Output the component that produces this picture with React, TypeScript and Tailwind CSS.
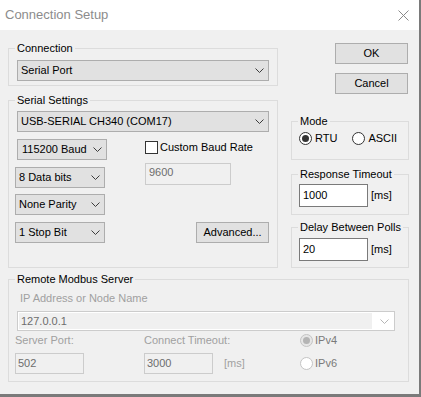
import React from "react";

const Chevron: React.FC<{ disabled?: boolean }> = ({ disabled }) => (
  <svg width="9" height="5" viewBox="0 0 9 5" className="shrink-0">
    <path
      d="M0.5 0.5 L4.5 4.5 L8.5 0.5"
      fill="none"
      stroke={disabled ? "#b5b5b5" : "#3c3c3c"}
      strokeWidth="1"
    />
  </svg>
);

const Combo: React.FC<{ label: string; className?: string }> = ({ label, className = "" }) => (
  <div
    className={`flex items-center justify-between h-[21px] border border-[#adadad] bg-[#e1e1e1] pl-[3px] pr-[4px] ${className}`}
  >
    <span className="leading-[13px]">{label}</span>
    <Chevron />
  </div>
);

const Button: React.FC<{ label: string; className?: string }> = ({ label, className = "" }) => (
  <div
    className={`flex items-center justify-center w-[73px] h-[21px] border border-[#adadad] bg-[#e1e1e1] ${className}`}
  >
    {label}
  </div>
);

const GroupBox: React.FC<{ title: string; className?: string; children?: React.ReactNode }> = ({
  title,
  className = "",
  children,
}) => (
  <div className={`relative border border-[#dcdcdc] ${className}`}>
    <span className="absolute -top-[7px] left-[6px] bg-[#f0f0f0] px-[2px] leading-[13px] whitespace-nowrap">
      {title}
    </span>
    {children}
  </div>
);

const Radio: React.FC<{ checked?: boolean; disabled?: boolean }> = ({ checked, disabled }) => (
  <div
    className={`flex items-center justify-center w-[13px] h-[13px] rounded-full border shrink-0 ${
      disabled
        ? checked
          ? "border-[#c4c4c4] bg-[#e6e6e6]"
          : "border-[#c4c4c4] bg-white"
        : "border-[#333] bg-white"
    }`}
  >
    {checked && (
      <div className={`w-[7px] h-[7px] rounded-full ${disabled ? "bg-[#b4b4b4]" : "bg-[#333]"}`} />
    )}
  </div>
);

export default function App() {
  return (
    <div className="w-[421px] h-[397px] bg-[#7a7a7a] font-['Liberation_Sans',Arial,sans-serif] text-[11px] text-black">
      <div className="w-[419px] h-[394px] flex flex-col">
        {/* title bar */}
        <div className="h-[30px] bg-white flex items-center justify-between pl-[5px] pr-[10px]">
          <span className="text-[13px] text-[#8c8c8c] leading-[16px]">Connection Setup</span>
          <svg width="11" height="11" viewBox="0 0 11 11">
            <path d="M0.5 0.5 L10.5 10.5 M10.5 0.5 L0.5 10.5" stroke="#8a8a8a" strokeWidth="1" />
          </svg>
        </div>

        <div className="flex-1 bg-[#f0f0f0] px-[8px]">
          <div className="flex">
            {/* left column */}
            <div className="w-[270px] flex flex-col">
              <GroupBox title="Connection" className="mt-[18px] h-[38px] pt-[11px] px-[8px]">
                <Combo label="Serial Port" />
              </GroupBox>

              <GroupBox title="Serial Settings" className="mt-[14px] h-[168px] pt-[10px] px-[8px]">
                <Combo label="USB-SERIAL CH340 (COM17)" />
                <div className="flex ml-[-2px] mt-[7px]">
                  <div className="w-[92px] flex flex-col">
                    <Combo label="115200 Baud" className="ml-[2px] w-[90px] pl-[4px]" />
                    <Combo label="8 Data bits" className="w-[90px] mt-[7px]" />
                    <Combo label="None Parity" className="w-[90px] mt-[6px]" />
                    <Combo label="1 Stop Bit" className="w-[90px] mt-[7px]" />
                  </div>
                  <div className="ml-[38px] flex-1 flex flex-col">
                    <div className="flex items-center mt-[2px] h-[13px]">
                      <div className="w-[13px] h-[13px] border border-[#333] bg-white" />
                      <span className="ml-[2px] leading-[13px]">Custom Baud Rate</span>
                    </div>
                    <div className="mt-[9px] w-[86px] h-[22px] border border-[#cccccc] bg-[#f0f0f0] pl-[3px] pt-[2px] text-[#6d6d6d] leading-[13px]">
                      9600
                    </div>
                    <Button label="Advanced..." className="mt-auto self-end" />
                  </div>
                </div>
              </GroupBox>
            </div>

            {/* right column */}
            <div className="ml-[13px] w-[118px] flex flex-col">
              <Button label="OK" className="mt-[13px] self-end mr-[1px]" />
              <Button label="Cancel" className="mt-[9px] self-end mr-[1px]" />

              <GroupBox title="Mode" className="mt-[27px] h-[39px] pt-[10px] pl-[7px]">
                <div className="flex items-center">
                  <Radio checked />
                  <span className="ml-[3px] leading-[13px]">RTU</span>
                  <div className="ml-[15px] flex items-center">
                    <Radio />
                    <span className="ml-[3px] leading-[13px]">ASCII</span>
                  </div>
                </div>
              </GroupBox>

              <GroupBox title="Response Timeout" className="mt-[14px] h-[41px] pt-[9px] pl-[7px]">
                <div className="flex items-center">
                  <div className="w-[69px] h-[23px] border border-[#7a7a7a] bg-white pl-[3px] flex items-center">
                    1000
                  </div>
                  <span className="ml-[3px]">[ms]</span>
                </div>
              </GroupBox>

              <GroupBox title="Delay Between Polls" className="mt-[12px] h-[41px] pt-[10px] pl-[7px]">
                <div className="flex items-center">
                  <div className="w-[69px] h-[23px] border border-[#7a7a7a] bg-white pl-[3px] flex items-center">
                    20
                  </div>
                  <span className="ml-[3px]">[ms]</span>
                </div>
              </GroupBox>
            </div>
          </div>

          <GroupBox title="Remote Modbus Server" className="mt-[11px] w-[401px] h-[103px] pt-[12px] pl-[8px]">
            <div className="pl-[3px] text-[#a0a0a0] leading-[13px]">IP Address or Node Name</div>
            <div className="mt-[6px] w-[378px] h-[20px] border border-[#cccccc] bg-white flex items-center pl-[1px] pr-[5px]">
              <div className="flex-1 h-[16px] bg-[#f0f0f0] pl-[2px] text-[#6d6d6d] leading-[16px] mr-[8px]">
                127.0.0.1
              </div>
              <Chevron disabled />
            </div>
            <div className="ml-[-2px] mt-[3px] grid grid-cols-[129px_156px_auto] grid-rows-[13px_21px] gap-y-[6px] text-[#a0a0a0] leading-[13px]">
              <span>Server Port:</span>
              <span>Connect Timeout:</span>
              <div className="flex items-center">
                <Radio checked disabled />
                <span className="ml-[2px] text-[#7a7a7a]">IPv4</span>
              </div>
              <div className="w-[69px] h-[21px] border border-[#cccccc] bg-[#f0f0f0] pl-[2px] flex items-center text-[#6d6d6d]">
                502
              </div>
              <div className="flex items-center">
                <div className="w-[69px] h-[21px] border border-[#cccccc] bg-[#f0f0f0] pl-[2px] flex items-center text-[#6d6d6d]">
                  3000
                </div>
                <span className="ml-[11px]">[ms]</span>
              </div>
              <div className="flex items-center">
                <Radio disabled />
                <span className="ml-[2px] text-[#7a7a7a]">IPv6</span>
              </div>
            </div>
          </GroupBox>
        </div>
      </div>
    </div>
  );
}
